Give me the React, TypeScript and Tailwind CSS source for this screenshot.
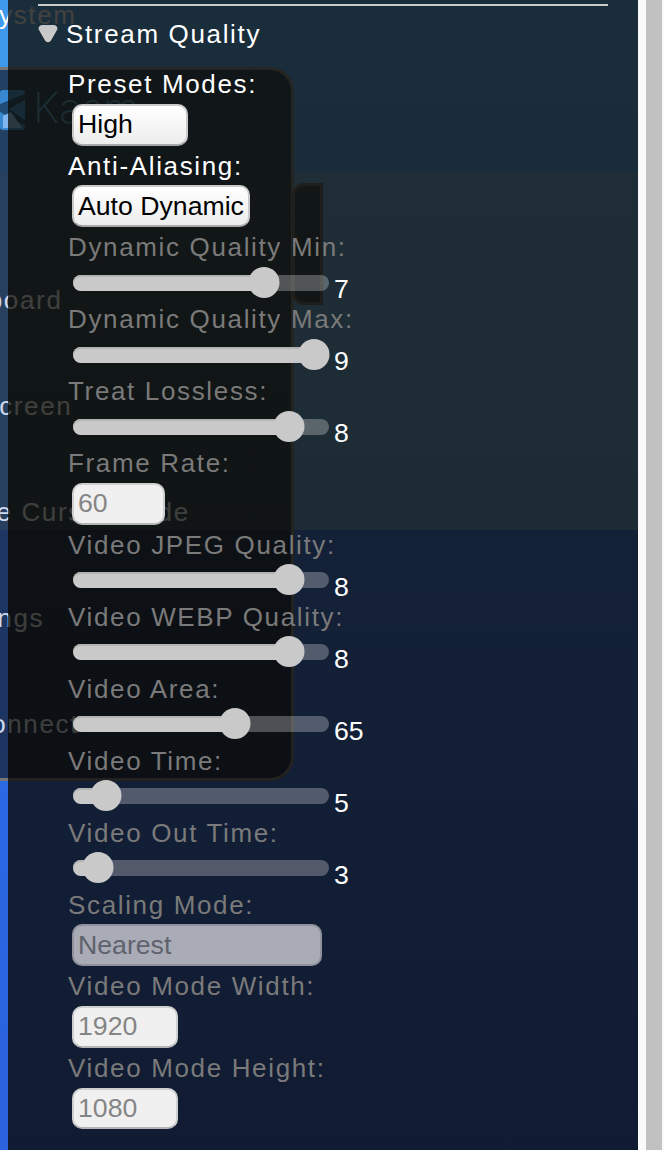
const sans = "font-['Liberation_Sans',Arial,sans-serif]";

function Label({ text, dim }: { text: string; dim?: boolean }) {
  return (
    <div className={`h-[39.8px] pt-[1.5px] flex items-center text-[26px] tracking-[1.65px] whitespace-nowrap ${dim ? "text-[#7a7a7a]" : "text-white"}`}>
      {text}
    </div>
  );
}

function Field({ text, width, variant }: { text: string; width: string; variant: "active" | "disabled" | "muted" }) {
  const look = {
    active: "border-[#c9c9c9] border-b-[#a8a8a8] bg-gradient-to-b from-white to-[#ededed] text-black",
    disabled: "border-[#cfcfcf] border-b-[#b5b5b5] bg-[#f0f0f0] text-[#858585]",
    muted: "border-[#8f929d] bg-[#a9acb6] text-[#5f626d]",
  }[variant];
  return (
    <div className={`ml-1 h-[41.8px] ${width} flex items-center rounded-[10px] border-2 pl-[4px] pb-[1.2px] text-[26.67px] whitespace-nowrap overflow-hidden ${look}`}>
      {text}
    </div>
  );
}

function Slider({ label, value, thumb }: { label: string; value: string; thumb: number }) {
  return (
    <div>
      <Label text={label} dim />
      <div className="h-[32.2px] flex ml-[5px]">
        <div className="relative mt-[7.7px] h-4 w-[256px] rounded-full bg-[rgba(255,255,255,0.27)]">
          <div
            className="absolute left-0 top-0 h-4 rounded-l-full bg-[#c9c9c9] shadow-[inset_0_2px_0_#b3b3b3]"
            style={{ width: thumb }}
          />
          <div
            className="absolute top-[-8px] size-[31px] -translate-x-1/2 rounded-full bg-[#c9c9c9]"
            style={{ left: thumb }}
          />
        </div>
        <div className="ml-[5px] pt-[7.4px] text-[26.67px] leading-[30px] text-white">{value}</div>
      </div>
    </div>
  );
}

function MenuItem({ text, offset }: { text: string; offset: string }) {
  return (
    <div className={`h-[106px] flex items-center whitespace-nowrap text-[26px] tracking-[1.65px] text-white ${offset}`}>
      {text}
    </div>
  );
}

export default function App() {
  return (
    <div className={`relative flex h-[1150px] w-[664px] overflow-hidden bg-[#fafafa] ${sans}`}>
      {/* page underneath the settings overlay */}
      <div className="absolute left-0 top-0 h-[1150px] w-[638px] overflow-hidden">
        <div className="h-[172px] bg-[#3f9aee]" />
        <div className="h-[358px] bg-[#5b9fd8]" />
        <div className="h-[620px] bg-gradient-to-b from-[#2a6ce6] to-[#2c62de]" />
        <div className="absolute left-[-20px] top-[-1px] h-8 flex items-center whitespace-nowrap text-[26px] tracking-[1.65px] text-white">
          System
        </div>
        {/* control-bar menu */}
        <div className="absolute left-[-24px] top-[67px] h-[714px] w-[318px] rounded-[24px] border-[3px] border-[#777777] bg-[rgba(0,0,0,0.72)]">
          <div className="flex h-[103px] items-start pl-[21px] pt-[20px]">
            <svg width="25" height="40" viewBox="0 0 25 40" className="shrink-0">
              <rect x="0" y="0" width="25" height="40" rx="3" fill="#2d8fd8" />
              <path d="M0 14 25 4v6L9 19l16 11v6L0 22z" fill="#0f3d5c" />
              <path d="M3 26l8-4 11 16H3z" fill="#8fd0ff" />
            </svg>
            <span className="ml-[8px] text-[42px] leading-[36px] font-['Inter',sans-serif] font-extralight text-[#4a9cc8]">Kasm</span>
          </div>
          <div className="mt-[74px]">
            <MenuItem text="Keyboard" offset="ml-[-41px]" />
            <MenuItem text="Fullscreen" offset="ml-[-43px]" />
            <MenuItem text="Toggle Cursor Mode" offset="ml-[-53px]" />
            <MenuItem text="Settings" offset="ml-[-42px]" />
            <MenuItem text="Disconnect" offset="ml-[-45px]" />
          </div>
        </div>
        {/* the same menu seen without the overlay's dimming, in the bare left strip */}
        <div className="absolute left-0 top-[70px] h-[708px] w-2 bg-[rgba(80,120,190,0.28)]" />
        {/* drawer handle */}
        <div className="absolute left-[292px] top-[183px] h-[122px] w-[31px] rounded-l-[12px] border-[3px] border-[#555555] bg-[rgba(0,0,0,0.72)]" />
      </div>

      {/* settings overlay */}
      <div className="relative ml-2 h-[1150px] w-[630px] bg-gradient-to-b from-[rgba(17,18,15,0.8)] to-[rgba(10,10,8,0.8)]">
        <div className="ml-[30px] mt-1 h-[2px] w-[570px] bg-[#c9c9c9]" />
        <div className="mt-2 ml-[30px] flex h-10 items-center">
          <svg width="20" height="20" viewBox="0 0 20 20" className="shrink-0">
            <path d="M4 1h12a3.4 3.4 0 0 1 3 5l-6 10.5a3.4 3.4 0 0 1-6 0L1 6a3.4 3.4 0 0 1 3-5z" fill="#c9c9c9" />
          </svg>
          <span className="ml-2 text-[26px] tracking-[1.65px] text-white">Stream Quality</span>
        </div>
        <div className="mt-[10px] ml-[60px] flex flex-col">
          <Label text="Preset Modes:" />
          <Field text="High" width="w-[116px]" variant="active" />
          <Label text="Anti-Aliasing:" />
          <Field text="Auto Dynamic" width="w-[178px]" variant="active" />
          <Slider label="Dynamic Quality Min:" value="7" thumb={191} />
          <Slider label="Dynamic Quality Max:" value="9" thumb={241} />
          <Slider label="Treat Lossless:" value="8" thumb={216} />
          <Label text="Frame Rate:" dim />
          <Field text="60" width="w-[93px]" variant="disabled" />
          <Slider label="Video JPEG Quality:" value="8" thumb={216} />
          <Slider label="Video WEBP Quality:" value="8" thumb={216} />
          <Slider label="Video Area:" value="65" thumb={162} />
          <Slider label="Video Time:" value="5" thumb={33} />
          <Slider label="Video Out Time:" value="3" thumb={25} />
          <Label text="Scaling Mode:" dim />
          <Field text="Nearest" width="w-[250px]" variant="muted" />
          <Label text="Video Mode Width:" dim />
          <Field text="1920" width="w-[106px]" variant="disabled" />
          <Label text="Video Mode Height:" dim />
          <Field text="1080" width="w-[106px]" variant="disabled" />
        </div>
      </div>

      {/* scrollbar */}
      <div className="ml-2 h-[1150px] w-4 bg-[#c1c1c1]" />
    </div>
  );
}
